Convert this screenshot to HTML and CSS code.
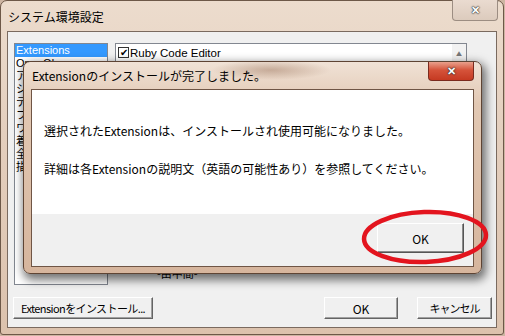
FILE: index.html
```html
<!DOCTYPE html>
<html lang="ja">
<head>
  <meta charset="UTF-8">
  <title>システム環境設定</title>
  <link rel="stylesheet" href="styles.css">
</head>
<body>
  <div class="window">
    <div class="titlebar">
      <span class="title">システム環境設定</span>
      <button class="close close-grey">&#x2715;</button>
    </div>
    <div class="client">
      <div class="top-row">
        <ul class="side-list">
          <li class="selected">Extensions</li>
          <li>OpenGL</li>
          <li>アプリ</li>
          <li>システム</li>
          <li>テンプレート</li>
          <li>ファイル</li>
          <li>ワークスペース</li>
          <li>着色</li>
          <li>全般</li>
          <li>描画</li>
        </ul>
        <div class="right-panel">
          <div class="ext-list">
            <div class="ext-row">
              <span class="check">&#x2714;</span>Ruby Code Editor
            </div>
            <span class="scroll-up">&#x25B2;</span>
          </div>
          <div class="ext-label">-由中間-</div>
        </div>
      </div>
      <div class="bottom-row">
        <button class="btn btn-install">Extensionをインストール...</button>
        <span class="spacer"></span>
        <button class="btn btn-ok">OK</button>
        <button class="btn btn-cancel">キャンセル</button>
      </div>
    </div>
  </div>

  <!-- 完了ダイアログ -->
  <div class="dialog">
    <div class="dialog-title">
      <span class="title">Extensionのインストールが完了しました。</span>
      <button class="close close-red">&#x2715;</button>
    </div>
    <div class="dialog-client">
      <div class="message">
        <p>選択されたExtensionは、インストールされ使用可能になりました。</p>
        <p>詳細は各Extensionの説明文（英語の可能性あり）を参照してください。</p>
      </div>
      <div class="dialog-footer">
        <button class="btn btn-dialog-ok">OK</button>
      </div>
    </div>
  </div>

  <svg class="mark" width="132" height="58" viewBox="0 0 132 58">
    <ellipse cx="64" cy="29" rx="61" ry="25" fill="none" stroke="#e3141e" stroke-width="4.5" transform="rotate(-2 64 29)"/>
  </svg>
</body>
</html>
```

FILE: styles.css
```css
body {
  margin: 0;
  width: 505px;
  height: 336px;
  overflow: hidden;
  background: #cdb5a2;
  font-family: "Noto Sans CJK JP", "Noto Sans", sans-serif;
  font-size: 12px;
  color: #000;
}
ul, p {
  margin: 0;
  padding: 0;
}
.window {
  box-sizing: border-box;
  width: 504px;
  height: 335px;
  border: 1px solid #6d5848;
  border-radius: 7px 7px 3px 3px;
  padding: 0 6px 6px 6px;
  display: flex;
  flex-direction: column;
  background: linear-gradient(180deg, #ecdccd 0%, #e4cfbe 40%, #dcc2ad 100%);
}
.titlebar {
  height: 30px;
  display: flex;
  align-items: flex-start;
  justify-content: space-between;
}
.titlebar .title {
  padding-top: 7px;
  padding-left: 1px;
  font-size: 12px;
}
.close {
  width: 46px;
  height: 21px;
  border-radius: 0 0 4px 4px;
  font-size: 11px;
  font-weight: bold;
  color: #fff;
  padding: 0;
  text-shadow: 0 0 1px #333, 0 0 1px #333, 0 0 2px #333;
}
.close-grey {
  margin-top: -1px;
  margin-right: -1px;
  border: 1px solid #9c8d82;
  border-top: none;
  background: linear-gradient(180deg, #eadbd0, #dccbbd);
}
.client {
  flex: 1;
  border: 1px solid #7a6a5f;
  background: #f0f0f0;
  padding: 11px 4px 8px 6px;
  display: flex;
  flex-direction: column;
}
.top-row {
  height: 242px;
  display: flex;
  gap: 7px;
}
.side-list {
  list-style: none;
  width: 94px;
  box-sizing: border-box;
  border: 1px solid #828790;
  background: #fff;
  overflow: hidden;
  font-family: "Liberation Sans", "Noto Sans CJK JP", sans-serif;
  font-size: 11px;
}
.side-list li {
  height: 13px;
  line-height: 13px;
  padding-left: 1px;
  white-space: nowrap;
}
.side-list li.selected {
  background: #3399ff;
  color: #fff;
}
.right-panel {
  width: 352px;
  display: flex;
  flex-direction: column;
}
.ext-list {
  height: 215px;
  box-sizing: border-box;
  border: 1px solid #828790;
  background: #fff;
  display: flex;
  justify-content: space-between;
}
.ext-row {
  display: flex;
  align-items: center;
  height: 17px;
  padding-left: 2px;
  font-family: "Liberation Sans", sans-serif;
  font-size: 11.5px;
}
.check {
  width: 11px;
  height: 11px;
  box-sizing: border-box;
  border: 1px solid #333;
  font-size: 10px;
  line-height: 9px;
  text-align: center;
  margin-right: 1px;
}
.scroll-up {
  width: 14px;
  font-size: 6px;
  color: #777;
  text-align: center;
  padding-top: 5px;
  background: #f2f2f2;
}
.ext-label {
  margin-top: 7px;
  margin-left: 42px;
  font-size: 11px;
}
.bottom-row {
  margin-top: auto;
  display: flex;
  align-items: center;
}
.spacer {
  flex: 1;
}
.btn {
  height: 22px;
  box-sizing: border-box;
  background: #f0f0f0;
  border: 1px solid;
  border-color: #fff #646464 #646464 #fff;
  box-shadow: inset -1px -1px #a0a0a0;
  font-family: "Noto Sans CJK JP", "Noto Sans", sans-serif;
  font-size: 12px;
  padding: 0;
  color: #000;
  white-space: nowrap;
}
.btn-install {
  width: 140px;
  margin-left: -1px;
  font-size: 11px;
  letter-spacing: -0.6px;
}
.btn-ok {
  width: 74px;
  margin-right: 19px;
}
.btn-cancel {
  width: 75px;
  font-size: 11px;
  letter-spacing: -1px;
}
.dialog {
  position: absolute;
  left: 23px;
  top: 61px;
  width: 459px;
  height: 213px;
  box-sizing: border-box;
  border: 1px solid #5e4434;
  border-radius: 7px;
  padding: 0 7px 6px 7px;
  display: flex;
  flex-direction: column;
  background: linear-gradient(180deg, #f0e2d6 0%, #e2c8b3 20%, #d6b59d 100%);
  box-shadow: 2px 4px 10px 2px rgba(0, 0, 0, 0.55);
}
.dialog-title {
  height: 27px;
  display: flex;
  justify-content: space-between;
  align-items: flex-start;
  background: radial-gradient(ellipse 60px 10px at 240px 8px, rgba(150, 110, 85, 0.45), transparent);
}
.dialog-title .title {
  padding-top: 5px;
  padding-left: 1px;
  font-size: 12px;
}
.close-red {
  margin-right: 0;
  width: 46px;
  height: 19px;
  border: 1px solid #7a2a1e;
  border-top: none;
  background: linear-gradient(180deg, #e9a08c 0%, #d5533a 45%, #c53a22 100%);
}
.dialog-client {
  flex: 1;
  border: 1px solid #6f5545;
  display: flex;
  flex-direction: column;
}
.message {
  height: 124px;
  background: #fff;
  padding: 32px 0 0 12px;
  box-sizing: border-box;
}
.message p {
  height: 38px;
  line-height: 18px;
  white-space: nowrap;
}
.dialog-footer {
  flex: 1;
  background: #f0f0f0;
  display: flex;
  justify-content: flex-end;
  align-items: flex-start;
  padding: 9px 9px 0 0;
}
.btn-dialog-ok {
  width: 87px;
  height: 30px;
  border-color: #fff #555 #555 #fff;
  box-shadow: inset -1px -1px #8a8a8a;
}
.mark {
  position: absolute;
  left: 361px;
  top: 208px;
}
```
